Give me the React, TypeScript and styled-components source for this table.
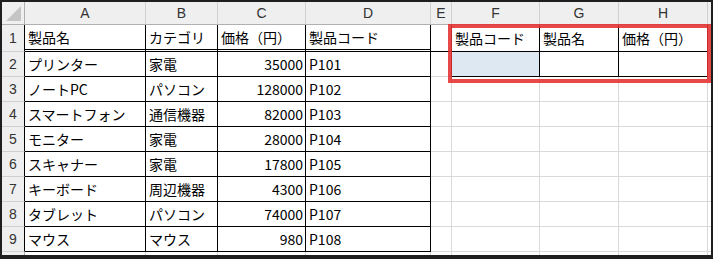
import React from 'react'
import styled, { createGlobalStyle } from 'styled-components'

const GRID = '#d9d9d9'
const BLACK = '#000'

type Value = string | number

const products: Value[][] = [
  ['製品名', 'カテゴリ', '価格（円）', '製品コード'],
  ['プリンター', '家電', 35000, 'P101'],
  ['ノートPC', 'パソコン', 128000, 'P102'],
  ['スマートフォン', '通信機器', 82000, 'P103'],
  ['モニター', '家電', 28000, 'P104'],
  ['スキャナー', '家電', 17800, 'P105'],
  ['キーボード', '周辺機器', 4300, 'P106'],
  ['タブレット', 'パソコン', 74000, 'P107'],
  ['マウス', 'マウス', 980, 'P108'],
]

const lookupHead = ['製品コード', '製品名', '価格（円）']
const columns = ['A', 'B', 'C', 'D', 'E', 'F', 'G', 'H']

const GlobalStyle = createGlobalStyle`
  html, body {
    margin: 0;
    padding: 0;
    background: #fff;
  }
  body {
    font-family: "Noto Sans CJK JP", "Noto Sans", sans-serif;
  }
`

function App() {
  const rows = [...products, null]
  return (
    <Frame>
      <GlobalStyle />
      <Sheet>
        <Grid>
          <Corner>
            <CornerMark />
          </Corner>
          {columns.map((c) => (
            <ColHead key={c}>{c}</ColHead>
          ))}
          <ColHead />

          {rows.map((row, r) => {
            const n = r + 1
            const inTable = row !== null
            const inLookup = n <= 2
            return (
              <React.Fragment key={n}>
                {/* the last row is only a sliver at the bottom edge, so no label */}
                <RowHead $right={inTable ? BLACK : '#b0b0b0'}>{inTable ? n : ''}</RowHead>
                {[0, 1, 2, 3].map((c) => {
                  const v = row ? row[c] : ''
                  return (
                    <Cell
                      key={c}
                      $right={inTable ? BLACK : GRID}
                      $bottom={inTable ? BLACK : GRID}
                      $double={n === 1}
                      $align={typeof v === 'number' ? 'right' : 'left'}
                    >
                      {v}
                    </Cell>
                  )
                })}
                <Cell $right={inLookup ? BLACK : GRID} $bottom={n === 1 ? BLACK : GRID} />
                {[0, 1, 2].map((c) => (
                  <Cell
                    key={'l' + c}
                    $right={inLookup ? BLACK : GRID}
                    $bottom={inLookup ? BLACK : GRID}
                    $fill={n === 2 && c === 0 ? '#dde8f3' : undefined}
                  >
                    {n === 1 ? lookupHead[c] : ''}
                  </Cell>
                ))}
                <Cell $right={GRID} $bottom={GRID} />
              </React.Fragment>
            )
          })}
        </Grid>
        <Highlight />
      </Sheet>
    </Frame>
  )
}

export default App

const Frame = styled.div`
  width: 713px;
  height: 259px;
  box-sizing: border-box;
  padding: 2px 2px 4px 2px;
  background: #1f1f1f;
`

const Sheet = styled.div`
  position: relative;
  width: 100%;
  height: 100%;
  background: #fff;
  overflow: hidden;
`

const Grid = styled.div`
  display: grid;
  grid-template-columns: 23px 121px 72px 88px 125px 21px 88px 79px 89px 40px;
  grid-template-rows: 23px 27px repeat(9, 25px);
  font-size: 14px;
  color: #000;
`

const Corner = styled.div`
  position: relative;
  background: #efefef;
  border-right: 1px solid #b0b0b0;
  border-bottom: 1px solid #b0b0b0;
`

const CornerMark = styled.div`
  position: absolute;
  right: 3px;
  bottom: 3px;
  width: 0;
  height: 0;
  border-left: 15px solid transparent;
  border-bottom: 15px solid #c4c4c4;
`

const ColHead = styled.div`
  display: flex;
  align-items: center;
  justify-content: center;
  background: #efefef;
  border-right: 1px solid #d0d0d0;
  border-bottom: 1px solid #b0b0b0;
  color: #333;
  font-family: "Liberation Sans", Arial, sans-serif;
  font-size: 14px;
`

const RowHead = styled.div<{ $right: string }>`
  display: flex;
  align-items: center;
  justify-content: center;
  background: #efefef;
  border-right: 1px solid ${(p) => p.$right};
  border-bottom: 1px solid #d0d0d0;
  color: #333;
  font-family: "Liberation Sans", Arial, sans-serif;
  font-size: 14px;
`

const Cell = styled.div<{
  $right: string
  $bottom: string
  $double?: boolean
  $align?: 'left' | 'right'
  $fill?: string
}>`
  display: flex;
  align-items: center;
  justify-content: ${(p) => (p.$align === 'right' ? 'flex-end' : 'flex-start')};
  padding: 0 2px 0 3px;
  border-right: 1px solid ${(p) => p.$right};
  border-bottom: ${(p) => (p.$double ? `3px double ${BLACK}` : `1px solid ${p.$bottom}`)};
  background: ${(p) => p.$fill ?? '#fff'};
  white-space: nowrap;
  overflow: hidden;
`

const Highlight = styled.div`
  position: absolute;
  left: 446px;
  top: 22px;
  width: 263px;
  height: 59px;
  box-sizing: border-box;
  border: 4px solid rgba(228, 48, 48, 0.88);
  pointer-events: none;
`
